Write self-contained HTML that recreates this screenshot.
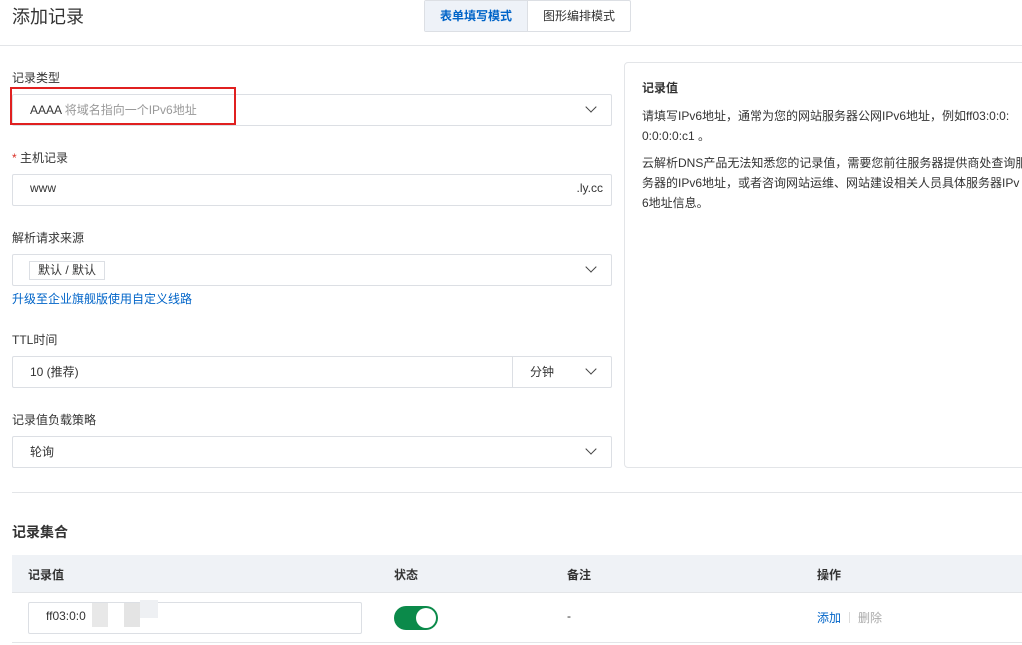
<!DOCTYPE html>
<html><head><meta charset="utf-8"><style>
*{box-sizing:border-box;margin:0;padding:0}
body{width:1022px;height:645px;overflow:hidden;background:#fff;font-family:"Liberation Sans","Noto Sans CJK SC",sans-serif;color:#333;position:relative;font-size:12px}
.a{position:absolute}
.lbl{font-size:12px;color:#333}
.box{position:absolute;left:12px;width:600px;height:32px;border:1px solid #dcdfe4;border-radius:2px;background:#fff}
.chev{position:absolute;right:16px;top:8px;width:8px;height:8px;border-right:1.3px solid #444;border-bottom:1.3px solid #444;transform:rotate(45deg)}
.t{position:absolute;left:17px;top:6px;font-size:12px;color:#333}
</style></head><body>
<div class="a" style="left:12px;top:3px;font-size:18px;color:#333">添加记录</div>
<div class="a" style="left:424px;top:0;width:207px;height:32px;border:1px solid #dcdfe4;border-radius:2px;display:flex">
 <div style="width:103px;background:#eef2f8;color:#0064c8;font-weight:bold;font-size:12px;text-align:center;line-height:30px;border-right:1px solid #dcdfe4">表单填写模式</div>
 <div style="flex:1;font-size:12px;text-align:center;line-height:30px;color:#333">图形编排模式</div>
</div>
<div class="a" style="left:0;top:45px;width:1022px;height:1px;background:#e3e5e8"></div>

<div class="a lbl" style="left:12px;top:69px">记录类型</div>
<div class="box" style="top:94px"><div class="t">AAAA <span style="color:#999">将域名指向一个IPv6地址</span></div><div class="chev"></div></div>
<div class="a" style="left:10px;top:87px;width:226px;height:38px;border:2px solid #e02020"></div>

<div class="a lbl" style="left:12px;top:149px"><span style="color:#d93026">*</span> 主机记录</div>
<div class="box" style="top:174px"><div class="t">www</div><div class="a" style="right:8px;top:6px;font-size:12px">.ly.cc</div></div>

<div class="a lbl" style="left:12px;top:229px">解析请求来源</div>
<div class="box" style="top:254px"><div class="a" style="left:16px;top:6px;width:76px;height:19px;border:1px solid #dcdfe4;font-size:12px;line-height:17px;padding-left:8px">默认 / 默认</div><div class="chev"></div></div>
<div class="a" style="left:12px;top:290px;font-size:12px;color:#0064c8">升级至企业旗舰版使用自定义线路</div>

<div class="a lbl" style="left:12px;top:331px">TTL时间</div>
<div class="box" style="top:356px"><div class="t">10 (推荐)</div><div class="a" style="left:499px;top:0;width:1px;height:30px;background:#dcdfe4"></div><div class="a" style="left:517px;top:6px">分钟</div><div class="chev"></div></div>

<div class="a lbl" style="left:12px;top:411px">记录值负载策略</div>
<div class="box" style="top:436px"><div class="t">轮询</div><div class="chev"></div></div>

<div class="a" style="left:624px;top:62px;width:410px;height:406px;border:1px solid #e3e5e8;border-radius:4px;padding:15px 0 0 17px;font-size:12px;line-height:20px;color:#333;white-space:nowrap">
<div style="font-weight:bold;margin-bottom:8px">记录值</div>
<div>请填写IPv6地址，通常为您的网站服务器公网IPv6地址，例如ff03:0:0:</div>
<div style="margin-bottom:7px">0:0:0:0:c1 。</div>
<div>云解析DNS产品无法知悉您的记录值，需要您前往服务器提供商处查询服</div>
<div>务器的IPv6地址，或者咨询网站运维、网站建设相关人员具体服务器IPv</div>
<div>6地址信息。</div>
</div>

<div class="a" style="left:12px;top:492px;width:1010px;height:1px;background:#e3e5e8"></div>
<div class="a" style="left:12px;top:522px;font-size:14px;font-weight:bold;color:#333">记录集合</div>
<div class="a" style="left:12px;top:555px;width:1010px;height:38px;background:#eff2f6;border-bottom:1px solid #e3e5e8"></div>
<div class="a" style="left:28px;top:566px;font-weight:bold">记录值</div>
<div class="a" style="left:394px;top:566px;font-weight:bold">状态</div>
<div class="a" style="left:567px;top:566px;font-weight:bold">备注</div>
<div class="a" style="left:817px;top:566px;font-weight:bold">操作</div>
<div class="a" style="left:28px;top:602px;width:334px;height:32px;border:1px solid #dcdfe4;border-radius:2px"><div class="t">ff03:0:0</div></div>
<div class="a" style="left:92px;top:603px;width:16px;height:24px;background:#e8e8e8"></div>
<div class="a" style="left:124px;top:603px;width:16px;height:24px;background:#e4e4e4"></div>
<div class="a" style="left:140px;top:600px;width:18px;height:18px;background:#eef0f3"></div>
<div class="a" style="left:394px;top:606px;width:44px;height:24px;border-radius:12px;background:#0b8a4a"><div class="a" style="left:22px;top:2px;width:20px;height:20px;border-radius:50%;background:#fff"></div></div>
<div class="a" style="left:567px;top:609px">-</div>
<div class="a" style="left:817px;top:609px;color:#0064c8">添加</div>
<div class="a" style="left:849px;top:612px;width:1px;height:11px;background:#ddd"></div>
<div class="a" style="left:858px;top:609px;color:#aaa">删除</div>
<div class="a" style="left:12px;top:642px;width:1010px;height:1px;background:#e3e5e8"></div>
</body></html>
